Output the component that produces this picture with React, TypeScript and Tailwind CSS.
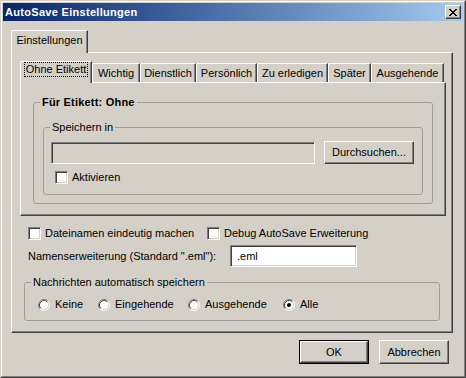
import type { ReactNode } from 'react';

const raised =
  'border border-t-white border-l-white border-r-[#404040] border-b-[#404040] shadow-[inset_-1px_-1px_#808080]';
const sunken =
  'border border-t-[#808080] border-l-[#808080] border-r-white border-b-white shadow-[inset_1px_1px_#404040,inset_-1px_-1px_#d4d0c8]';

function Checkbox({ label }: { label: string }) {
  return (
    <label className="flex items-center gap-[4px] leading-[13px]">
      <span className={`block size-[13px] bg-white ${sunken}`} />
      <span>{label}</span>
    </label>
  );
}

function Radio({ label, checked = false, width }: { label: string; checked?: boolean; width: string }) {
  return (
    <label className={`flex items-center gap-[5px] leading-[13px] ${width}`}>
      <svg width="12" height="12" viewBox="0 0 12 12" className="shrink-0">
        <circle cx="6" cy="6" r="5" fill="#ffffff" />
        <path d="M2.11 9.89 A5.5 5.5 0 0 1 9.89 2.11" fill="none" stroke="#808080" />
        <path d="M9.89 2.11 A5.5 5.5 0 0 1 2.11 9.89" fill="none" stroke="#ffffff" />
        <path d="M2.82 9.18 A4.5 4.5 0 0 1 9.18 2.82" fill="none" stroke="#404040" />
        <path d="M9.18 2.82 A4.5 4.5 0 0 1 2.82 9.18" fill="none" stroke="#d4d0c8" />
        {checked && <circle cx="6" cy="6" r="2" fill="#000000" />}
      </svg>
      <span>{label}</span>
    </label>
  );
}

function Group({ title, bold = false, children, className = '' }: { title: string; bold?: boolean; children: ReactNode; className?: string }) {
  return (
    <fieldset className={`rounded-[3px] border border-[#a09e96] ${className}`}>
      <legend className={`ml-[6px] px-[2px] leading-[13px] ${bold ? 'font-bold tracking-[0.2px]' : ''}`}>{title}</legend>
      {children}
    </fieldset>
  );
}

const innerTabs = [
  { label: 'Wichtig', w: 'w-[48px]' },
  { label: 'Dienstlich', w: 'w-[56px]' },
  { label: 'Persönlich', w: 'w-[61px]' },
  { label: 'Zu erledigen', w: 'w-[71px]' },
  { label: 'Später', w: 'w-[43px]' },
  { label: 'Ausgehende', w: 'w-[73px]' },
];

function Button({ children, def = false }: { children: ReactNode; def?: boolean }) {
  if (def) {
    return (
      <div className="h-[24px] w-[70px] border border-black">
        <div className={`flex h-full items-center justify-center ${raised}`}>{children}</div>
      </div>
    );
  }
  return <div className={`flex h-[24px] w-[70px] items-center justify-center ${raised}`}>{children}</div>;
}

export default function App() {
  return (
    <div className="h-[378px] w-[466px] border border-t-[#d4d0c8] border-l-[#d4d0c8] border-r-[#404040] border-b-[#404040] bg-[#d4d0c8] font-['Liberation_Sans',Arial,sans-serif] text-[11px] text-black">
      <div className="h-full border border-t-white border-l-white border-r-[#808080] border-b-[#808080] p-px">
        {/* title bar */}
        <div className="flex h-[18px] items-center justify-between bg-linear-to-r from-[#0a246a] to-[#a6caf0] pl-[2px] pr-[2px]">
          <span className="font-bold tracking-[0.3px] text-white">AutoSave Einstellungen</span>
          <div className={`flex h-[14px] w-[16px] items-center justify-center bg-[#d4d0c8] ${raised}`}>
            <svg width="8" height="7" viewBox="0 0 8 7" shapeRendering="crispEdges">
              <path
                d="M0 0h2v1h-2zM6 0h2v1h-2zM1 1h2v1h-2zM5 1h2v1h-2zM2 2h4v1h-4zM3 3h2v1h-2zM2 4h4v1h-4zM1 5h2v1h-2zM5 5h2v1h-2zM0 6h2v1h-2zM6 6h2v1h-2z"
                fill="#000"
              />
            </svg>
          </div>
        </div>

        <div className="ml-[8px] mt-[9px] w-[442px]">
          {/* outer tab */}
          <div className="relative z-10 -mb-px flex">
            <div className="flex h-[23px] w-[77px] items-start justify-center rounded-tl-[2px] border-t border-l border-r border-t-white border-l-white border-r-[#404040] bg-[#d4d0c8] pt-[3px] leading-[13px] shadow-[inset_-1px_0_#808080]">
              Einstellungen
            </div>
          </div>

          {/* outer panel */}
          <div className={`h-[281px] ${raised}`}>
            <div className="ml-[8px] mt-[8px] w-[426px]">
              {/* inner tabs */}
              <div className="relative z-10 -mb-px flex items-end">
                <div className="flex h-[22px] w-[72px] items-start justify-center rounded-tl-[2px] border-t border-l border-r border-t-white border-l-white border-r-[#404040] bg-[#d4d0c8] shadow-[inset_-1px_0_#808080]">
                  <span className="h-[15px] border border-dotted border-black px-px leading-[13px]">Ohne Etikett</span>
                </div>
                {innerTabs.map((t) => (
                  <div
                    key={t.label}
                    className={`mb-px flex h-[19px] ${t.w} items-center justify-center rounded-tl-[2px] border-t border-l border-r border-t-white border-l-white border-r-[#404040] leading-[13px] shadow-[inset_-1px_0_#808080]`}
                  >
                    {t.label}
                  </div>
                ))}
              </div>

              {/* inner panel */}
              <div className={`h-[134px] px-[12px] pt-[13px] ${raised}`}>
                <Group title="Für Etikett: Ohne" bold>
                  <div className="mt-[12px] px-[9px] pb-[8px]">
                    <Group title="Speichern in">
                      <div className="px-[7px] pb-[10px] pr-[8px]">
                        <div className="mt-[7px] flex items-end gap-[9px]">
                          <div className={`h-[22px] flex-1 bg-[#d4d0c8] ${sunken}`} />
                          <div className={`flex h-[23px] w-[90px] items-center justify-center ${raised}`}>Durchsuchen...</div>
                        </div>
                        <div className="ml-[4px] mt-[7px]">
                          <Checkbox label="Aktivieren" />
                        </div>
                      </div>
                    </Group>
                  </div>
                </Group>
              </div>
            </div>

            {/* options */}
            <div className="ml-[16px] mt-[11px] flex">
              <div className="w-[179px]">
                <Checkbox label="Dateinamen eindeutig machen" />
              </div>
              <Checkbox label="Debug AutoSave Erweiterung" />
            </div>
            <div className="ml-[16px] mt-[5px] flex items-center">
              <span className="w-[202px] leading-[13px]">Namenserweiterung (Standard ".eml"):</span>
              <div className={`flex h-[22px] w-[127px] items-center bg-white pl-[6px] ${sunken}`}>.eml</div>
            </div>

            <div className="ml-[12px] mt-[9px] w-[416px]">
              <Group title="Nachrichten automatisch speichern">
                <div className="mt-[9px] flex pb-[9px] pl-[13px]">
                  <Radio label="Keine" width="w-[60px]" />
                  <Radio label="Eingehende" width="w-[90px]" />
                  <Radio label="Ausgehende" width="w-[95px]" />
                  <Radio label="Alle" checked width="w-[60px]" />
                </div>
              </Group>
            </div>
          </div>
        </div>

        {/* buttons */}
        <div className="mt-[7px] flex justify-end gap-[10px] pr-[14px]">
          <Button def>OK</Button>
          <Button>Abbrechen</Button>
        </div>
      </div>
    </div>
  );
}
